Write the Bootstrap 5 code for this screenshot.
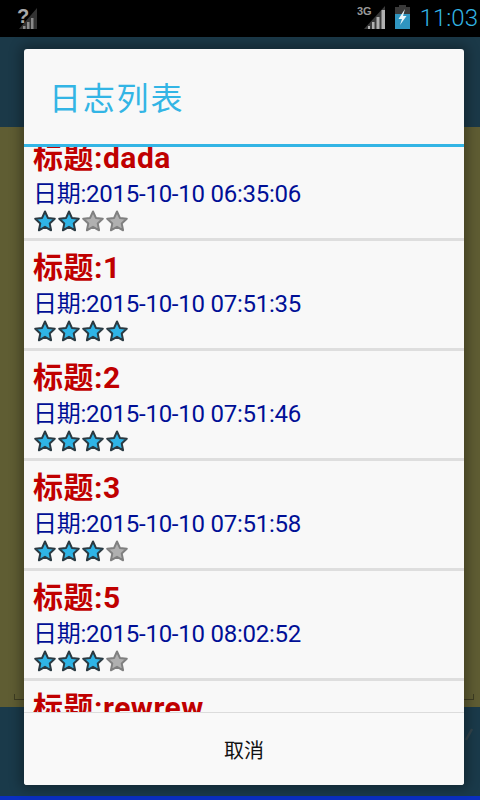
<!DOCTYPE html>
<html lang="zh">
<head>
<meta charset="utf-8">
<title>日志列表</title>
<link rel="stylesheet" href="https://cdn.jsdelivr.net/npm/bootstrap@5.3.0/dist/css/bootstrap.min.css">
<style>
html,body{height:800px;overflow:hidden}
body{font-family:Roboto,"Noto Sans CJK SC",sans-serif;background:#000;width:480px}
.stage{height:800px}
.sbar{height:37px;background:#000;flex:none}
.sq{font:700 20px/1 "Liberation Sans",sans-serif;color:#a8a8a8;position:absolute;left:17px;top:6px}
.sg{font:700 11px/1 "Liberation Sans",sans-serif;color:#9a9a9a;position:absolute;left:357px;top:6px}
.sigl{margin:5px 0 0 18px}
.sigr{margin:5px 9px 0 0}
.batt{margin:5px 10px 0 0}
.clock{font:300 24px/1 Roboto,sans-serif;color:#33b5e5;margin:6px 2px 0 0}
.band{height:90px;background:#1b3948;flex:none}
.olive{height:580px;background:#5f5d33;flex:none;position:relative}
.olive::before,.olive::after{content:"";position:absolute;bottom:7px;width:10px;height:6px;border-bottom:1px solid #3d3c22}
.olive::before{left:14px;border-left:1px solid #3d3c22}
.olive::after{right:6px;border-right:1px solid #3d3c22}
.band2{height:89px;background:#1a3a4a;flex:none;position:relative}
.mk{position:absolute;left:465px;top:21px}
.blueb{height:4px;background:#0a2fc0;flex:none}
.dlg{position:absolute;left:24px;top:49px;width:440px;height:736px;background:#f8f8f8;border-radius:3px;box-shadow:0 0 12px 4px rgba(0,0,0,.3);overflow:hidden}
.dh{height:95px;flex:none;padding-left:25px;font:400 32px/95px "Noto Sans CJK SC",sans-serif;color:#33b5e5;letter-spacing:1.8px}
.dline{height:3px;background:#33b5e5;flex:none}
.logs{height:565px;overflow:hidden;flex:none}
.logs-in{margin-top:-16px}
.logitem{height:110px;border-bottom:3px solid #dedede;padding-left:9px}
.lt{font:700 30px/36px Roboto,"Noto Sans CJK SC",sans-serif;color:#c00000;padding-top:9px;height:46px;letter-spacing:.5px}
.ld{font:400 24px/30px Roboto,"Noto Sans CJK SC",sans-serif;color:#000f96;margin-top:2px;height:30px;letter-spacing:-.25px}
.lr{height:24px}
.lr svg{display:block;width:24px;height:24px}
.dfoot{border-top:1px solid #dcdcdc;height:73px;flex:none;font:400 20px/73px "Noto Sans CJK SC",sans-serif;color:#111;background:#f9f9f9}
.on{fill:#2fb4e6;stroke:#2b3a42}
.off{fill:#b0b0b0;stroke:#808080}
</style>
</head>
<body>
<div class="stage d-flex flex-column position-relative">
  <div class="sbar d-flex justify-content-between position-relative">
    <div class="d-flex">
      <svg class="sigl" width="20" height="24" viewBox="0 0 20 24"><path d="M1 24L19 3v21z" fill="#333"/><path d="M5 24v-3h2.500v3zM9 24v-7h2.500v7zM13 24v-11h2.500v11z" fill="#8a8a8a"/></svg>
      <div class="sq">?</div>
    </div>
    <div class="d-flex">
      <span class="sg">3G</span>
      <svg class="sigr" width="22" height="24" viewBox="0 0 22 24"><path d="M0 24L21 1v23z" fill="#3a3a3a"/><path d="M4 24v-3h2v3zM8 24v-7h2.500v7zM12.500 24v-12h3v12zM17.500 24V5h3.500v19z" fill="#b0b0b0"/></svg>
      <svg class="batt" width="15" height="24" viewBox="0 0 15 24"><path d="M4 0h7v2h4v22H0V2h4z" fill="#3a3a3a"/><path d="M0 9h15v15H0z" fill="#2f95c0"/><path d="M10 4L3.500 14h3.500l-2 6 6.500-9H8z" fill="#eaf6fb"/></svg>
      <div class="clock">11:03</div>
    </div>
  </div>
  <div class="band"></div>
  <div class="olive"></div>
  <div class="band2"><svg class="mk" width="8" height="14" viewBox="0 0 8 14"><path d="M7 1L1 12" stroke="#33444c" stroke-width="2.500"/></svg></div>
  <div class="blueb"></div>

  <div class="dlg d-flex flex-column">
    <div class="dh">日志列表</div>
    <div class="dline"></div>
    <svg width="0" height="0" class="position-absolute"><defs><path id="st" d="M12 2.500l2.900 6.400 6.900.8-5.100 4.700 1.400 6.900-6.100-3.500-6.100 3.500 1.400-6.900L2.200 9.700l6.900-.8z" stroke-width="2" stroke-linejoin="round"/></defs></svg>
    <div class="logs">
      <div class="logs-in">
        <div class="logitem">
          <div class="lt">标题:dada</div><div class="ld">日期:2015-10-10 06:35:06</div>
          <div class="lr d-flex"><svg viewBox="0 0 24 24"><use href="#st" class="on"/></svg><svg viewBox="0 0 24 24"><use href="#st" class="on"/></svg><svg viewBox="0 0 24 24"><use href="#st" class="off"/></svg><svg viewBox="0 0 24 24"><use href="#st" class="off"/></svg></div>
        </div>
        <div class="logitem">
          <div class="lt">标题:1</div><div class="ld">日期:2015-10-10 07:51:35</div>
          <div class="lr d-flex"><svg viewBox="0 0 24 24"><use href="#st" class="on"/></svg><svg viewBox="0 0 24 24"><use href="#st" class="on"/></svg><svg viewBox="0 0 24 24"><use href="#st" class="on"/></svg><svg viewBox="0 0 24 24"><use href="#st" class="on"/></svg></div>
        </div>
        <div class="logitem">
          <div class="lt">标题:2</div><div class="ld">日期:2015-10-10 07:51:46</div>
          <div class="lr d-flex"><svg viewBox="0 0 24 24"><use href="#st" class="on"/></svg><svg viewBox="0 0 24 24"><use href="#st" class="on"/></svg><svg viewBox="0 0 24 24"><use href="#st" class="on"/></svg><svg viewBox="0 0 24 24"><use href="#st" class="on"/></svg></div>
        </div>
        <div class="logitem">
          <div class="lt">标题:3</div><div class="ld">日期:2015-10-10 07:51:58</div>
          <div class="lr d-flex"><svg viewBox="0 0 24 24"><use href="#st" class="on"/></svg><svg viewBox="0 0 24 24"><use href="#st" class="on"/></svg><svg viewBox="0 0 24 24"><use href="#st" class="on"/></svg><svg viewBox="0 0 24 24"><use href="#st" class="off"/></svg></div>
        </div>
        <div class="logitem">
          <div class="lt">标题:5</div><div class="ld">日期:2015-10-10 08:02:52</div>
          <div class="lr d-flex"><svg viewBox="0 0 24 24"><use href="#st" class="on"/></svg><svg viewBox="0 0 24 24"><use href="#st" class="on"/></svg><svg viewBox="0 0 24 24"><use href="#st" class="on"/></svg><svg viewBox="0 0 24 24"><use href="#st" class="off"/></svg></div>
        </div>
        <div class="logitem">
          <div class="lt">标题:rewrew</div>
        </div>
      </div>
    </div>
    <div class="dfoot text-center">取消</div>
  </div>
</div>
<script src="https://cdn.jsdelivr.net/npm/bootstrap@5.3.0/dist/js/bootstrap.bundle.min.js"></script>
</body>
</html>
